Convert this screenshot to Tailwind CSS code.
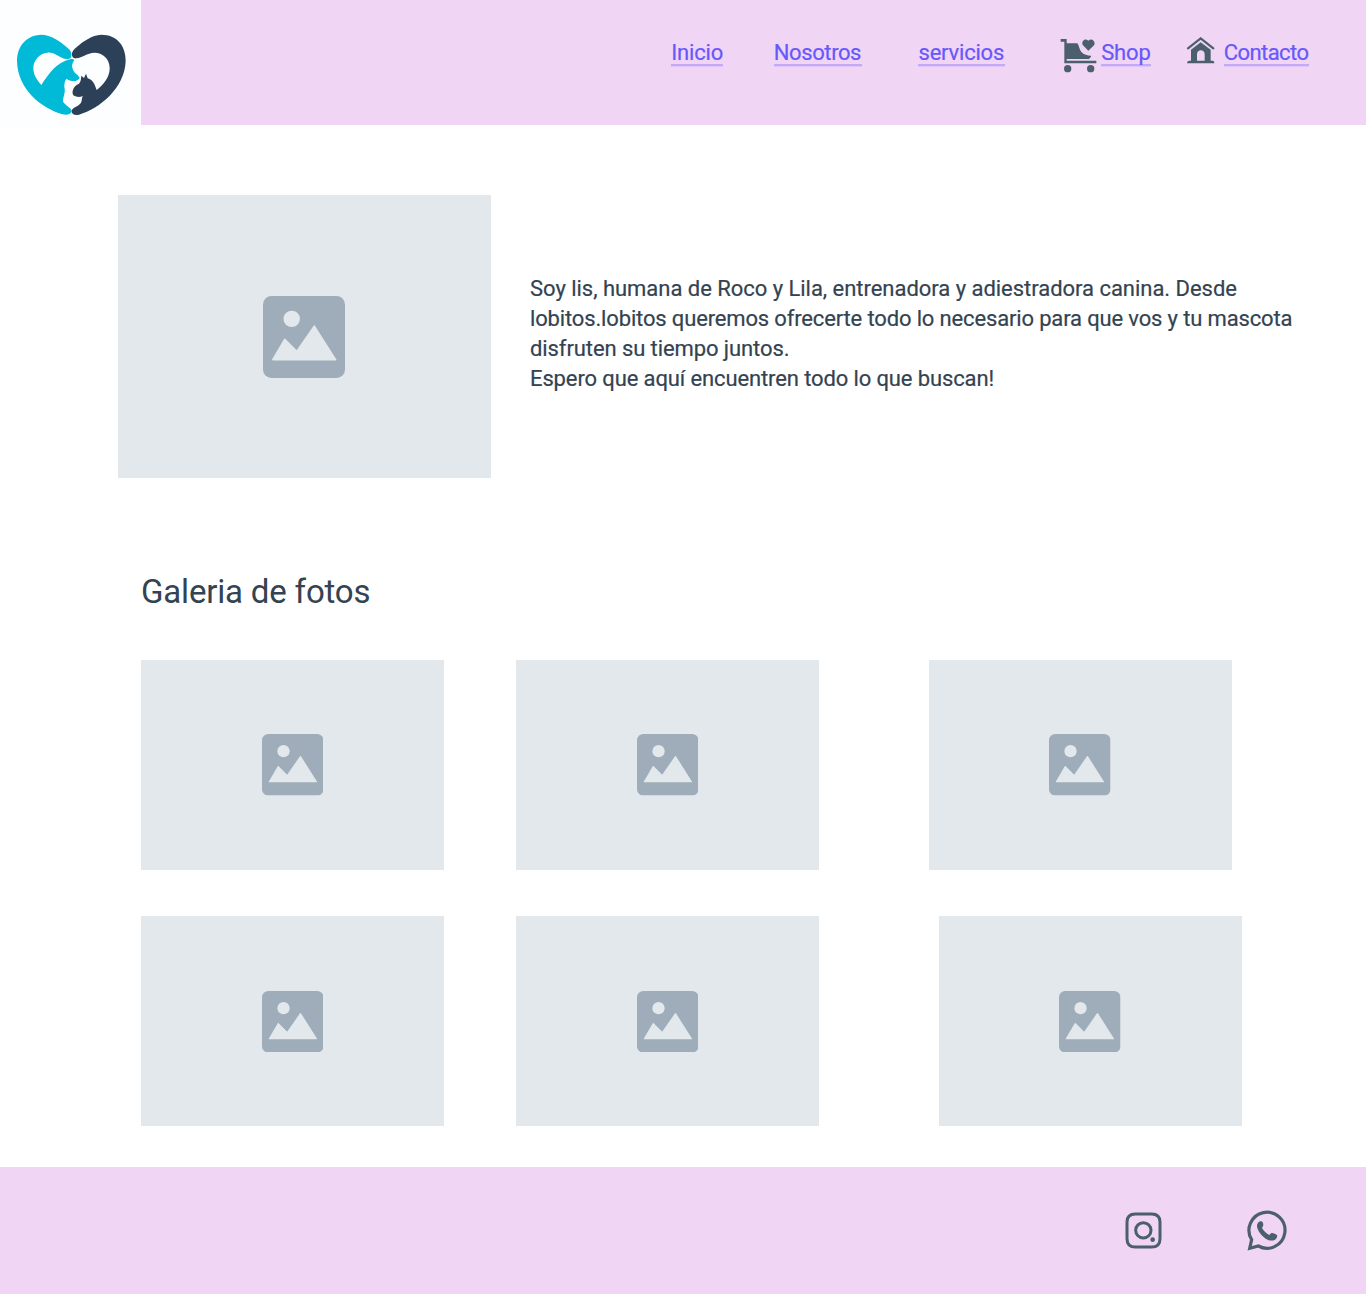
<!DOCTYPE html>
<html lang="es">
<head>
<meta charset="utf-8">
<title>Lobitos</title>
<script src="https://cdn.jsdelivr.net/npm/@tailwindcss/browser@4"></script>
</head>
<body class="bg-white text-[#334351] font-[Roboto,sans-serif] w-[1366px] h-[1294px] overflow-hidden">
<svg class="hidden">
  <symbol id="picture" viewBox="0 0 82 82">
    <rect width="82" height="82" rx="8.5" fill="#9eadb9"/>
    <circle cx="28.7" cy="22.9" r="8.2" fill="#e2e8ec"/>
    <path d="M9.8 63.6 21.7 43.4 33.7 55.4 51.3 30.2 72.6 63.6Z" fill="#e2e8ec" stroke="#e2e8ec" stroke-width="1.6" stroke-linejoin="round"/>
  </symbol>
</svg>
<header class="flex h-[124.5px] bg-[#f0d5f4]">
  <div class="w-[141px] h-[128px] bg-[#fdfeff] shrink-0">
    <svg class="block" width="141" height="128" viewBox="0 0 423 384">
      <path fill="#00bad8" d="M213 172C216 162 214 153 204 145C181 124 153 104 124 104C78 105 51 140 51 184C53 270 126 325 187 343C201 346 214 343 215 334C216 324 201 321 189 305C188 293 196 281 194 267C191 256 194 243 199 236C211 244 232 248 239 233C235 225 222 218 219 209C214 199 216 190 223 180C216 175 211 179 205 177C209 177 212 175 213 172Z"/>
      <path fill="#fdfeff" d="M124 255C110 240 100 224 100 205C100 180 119 160 142 158C160 156 171 167 187 174C195 178 201 177 211 177C169 188 146 221 124 255Z"/>
      <path fill="#2c4158" d="M216 166C214 155 223 147 231 140C251 123 275 106 304 104C350 104 378 137 377 184C374 264 300 326 237 344C224 347 215 343 215 333C216 323 232 322 242 310C247 303 244 296 248 288C238 293 229 291 220 286C218 281 217 278 218 273C220 263 226 255 237 251C243 245 243 235 244 227L252 234L258 221L263 235C280 240 284 254 290 270C309 254 330 232 329 203C328 174 306 158 284 158C260 159 247 173 229 175C221 176 217 173 216 166Z"/>
    </svg>
  </div>
  <nav class="flex grow items-start pt-[38px] pl-[530.3px] text-[22px] text-[#6658fa] whitespace-nowrap">
    <a class="w-[52px] mr-[50.5px] h-[28px] pt-[2px] leading-[26px] border-b-2 border-[#c3aaf8] shadow-[0_1px_0_#dfc5f6] tracking-[-0.2px] [-webkit-text-stroke:0.2px]">Inicio</a>
    <a class="w-[88px] mr-[56.7px] h-[28px] pt-[2px] leading-[26px] border-b-2 border-[#c3aaf8] shadow-[0_1px_0_#dfc5f6] tracking-[-0.4px] [-webkit-text-stroke:0.2px]">Nosotros</a>
    <a class="w-[87px] mr-[54.7px] h-[28px] pt-[2px] leading-[26px] border-b-2 border-[#c3aaf8] shadow-[0_1px_0_#dfc5f6] tracking-[-0.2px] [-webkit-text-stroke:0.2px]">servicios</a>
    <svg class="w-[37px] h-[36px] mr-[4px] shrink-0" viewBox="60 56 111 108" fill="#4b5f6c">
      <path d="M62 59H80V72H112C118 80 117 89 124 98C131 106 143 109 153 109V112L147 119H80V124H169V132H73V67H62Z"/>
      <path d="M145 94 129 78C122 69 133 54 145 64C157 54 168 69 162 78Z"/>
      <circle cx="83" cy="148" r="11"/><circle cx="152" cy="148" r="11"/>
    </svg>
    <a class="w-[50px] mr-[35px] h-[28px] pt-[2px] leading-[26px] border-b-2 border-[#c3aaf8] shadow-[0_1px_0_#dfc5f6] tracking-[-0.15px] [-webkit-text-stroke:0.2px]">Shop</a>
    <svg class="w-[29px] h-[27px] mr-[8.5px] -mt-px shrink-0" viewBox="438 51 87 81" fill="#4b5f6c">
      <path d="M444 85 482 55 520 85" fill="none" stroke="#4b5f6c" stroke-width="6.5" stroke-linecap="round"/>
      <path fill-rule="evenodd" d="M453 89 482 67 512 89V122H519Q523 122 523 130H441Q441 122 447 122H453ZM471 122H494V103C494 87 471 87 471 103Z"/>
    </svg>
    <a class="w-[85px] h-[28px] pt-[2px] leading-[26px] border-b-2 border-[#c3aaf8] shadow-[0_1px_0_#dfc5f6] tracking-[-0.55px] [-webkit-text-stroke:0.2px]">Contacto</a>
  </nav>
</header>
<main class="h-[1042px]">
  <section class="flex items-start pt-[70.5px] pl-[117.5px]">
    <div class="w-[373px] h-[283px] bg-[#e2e8ec] flex items-center justify-center"><svg class="w-[82px] h-[82px]"><use href="#picture"/></svg></div>
    <p class="flex flex-col items-start ml-[39.5px] pt-[79px] text-[22px] leading-[30px] whitespace-nowrap [-webkit-text-stroke:0.2px]">
      <span class="tracking-[-0.03px]">Soy lis, humana de Roco y Lila, entrenadora y adiestradora canina. Desde</span>
      <span class="tracking-[-0.15px]">lobitos.lobitos queremos ofrecerte todo lo necesario para que vos y tu mascota</span>
      <span class="tracking-[-0.09px]">disfruten su tiempo juntos.</span>
      <span class="tracking-[-0.12px]">Espero que aquí encuentren todo lo que buscan!</span>
    </p>
  </section>
  <h1 class="ml-[141px] mt-[92px] h-[90px] text-[33px] leading-[44px] tracking-[-0.18px] whitespace-nowrap">Galeria de fotos</h1>
  <section class="flex flex-col gap-[46.4px] pl-[141px]">
    <div class="flex">
      <div class="w-[303px] h-[210px] mr-[72px] bg-[#e2e8ec] flex items-center justify-center"><svg class="w-[61.5px] h-[61.5px]"><use href="#picture"/></svg></div>
      <div class="w-[303px] h-[210px] mr-[109.5px] bg-[#e2e8ec] flex items-center justify-center"><svg class="w-[61.5px] h-[61.5px]"><use href="#picture"/></svg></div>
      <div class="w-[303px] h-[210px] bg-[#e2e8ec] flex items-center justify-center"><svg class="w-[61.5px] h-[61.5px]"><use href="#picture"/></svg></div>
    </div>
    <div class="flex">
      <div class="w-[303px] h-[210px] mr-[72px] bg-[#e2e8ec] flex items-center justify-center"><svg class="w-[61.5px] h-[61.5px]"><use href="#picture"/></svg></div>
      <div class="w-[303px] h-[210px] mr-[119.5px] bg-[#e2e8ec] flex items-center justify-center"><svg class="w-[61.5px] h-[61.5px]"><use href="#picture"/></svg></div>
      <div class="w-[303px] h-[210px] bg-[#e2e8ec] flex items-center justify-center"><svg class="w-[61.5px] h-[61.5px]"><use href="#picture"/></svg></div>
    </div>
  </section>
</main>
<footer class="flex items-center justify-end gap-[85px] h-[127.5px] pr-[78px] bg-[#f0d5f4]">
  <svg class="w-[37px] h-[37px]" viewBox="76 66 111 111" fill="none" stroke="#4b5f6c" stroke-width="9">
    <path d="M107 72H156Q181 72 181 96V146Q181 171 156 171H107Q82 171 82 146V96Q82 72 107 72Z"/>
    <circle cx="131" cy="121" r="23"/><circle cx="159" cy="149" r="7" fill="#4b5f6c" stroke="none"/>
  </svg>
  <svg class="w-[41px] h-[41px]" viewBox="441 59 123 123" fill="#4b5f6c">
    <path d="M449 174 455 148A54 54 0 1 1 475 167Z" fill="none" stroke="#4b5f6c" stroke-width="9.5"/>
    <path d="M474 97C480 91 486 92 488 96C490 101 491 105 488 109L486 113C490 121 500 130 508 134L513 129C516 125 528 132 531 134C533 139 529 146 524 149C516 153 505 150 497 145C485 137 475 123 472 113C470 107 471 101 474 97Z"/>
  </svg>
</footer>
</body>
</html>
